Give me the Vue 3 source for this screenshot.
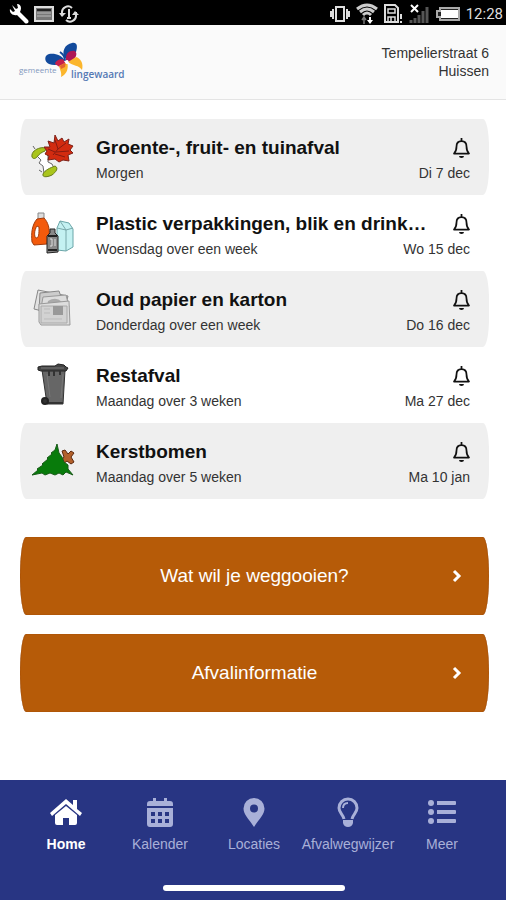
<script setup>
import { ref } from 'vue'

const pickups = ref([
  { icon: 'gft', title: 'Groente-, fruit- en tuinafval', when: 'Morgen', date: 'Di 7 dec' },
  { icon: 'plastic', title: 'Plastic verpakkingen, blik en drink…', when: 'Woensdag over een week', date: 'Wo 15 dec' },
  { icon: 'paper', title: 'Oud papier en karton', when: 'Donderdag over een week', date: 'Do 16 dec' },
  { icon: 'bin', title: 'Restafval', when: 'Maandag over 3 weken', date: 'Ma 27 dec' },
  { icon: 'tree', title: 'Kerstbomen', when: 'Maandag over 5 weken', date: 'Ma 10 jan' }
])

const actions = ['Wat wil je weggooien?', 'Afvalinformatie']

const tabs = ['Home', 'Kalender', 'Locaties', 'Afvalwegwijzer', 'Meer']
const activeTab = ref('Home')
</script>

<template>
  <div class="app">
    <!-- status bar -->
    <div class="status">
      <div class="status-group left">
        <svg width="20" height="20" viewBox="0 0 20 20">
          <path d="M3 1 L7 5 L9 4 L8 0 C12 0 13 4 11 8 L19 16 C21 19 17 21 15 18 L8 11 C4 12 0 9 1 5 L4 8 L6 7 Z" fill="#fff" />
        </svg>
        <svg width="20" height="16" viewBox="0 0 20 16">
          <rect x="1" y="1" width="18" height="14" fill="#777" stroke="#ddd" stroke-width="2" />
          <path d="M3 4h14" stroke="#222" stroke-width="2" />
          <path d="M3 7h14M3 10h14" stroke="#bbb" />
        </svg>
        <svg width="20" height="18" viewBox="0 0 20 18" fill="none" stroke="#ddd" stroke-width="2">
          <path d="M3 11V8a6 6 0 0 1 10-5M17 7v3a6 6 0 0 1-10 5M10 4v9M8 13h4" />
          <path d="M0 8h7l-4 4zM13 10h7l-4-4z" fill="#ddd" stroke="none" />
        </svg>
      </div>
      <div class="status-group">
        <svg width="20" height="18" viewBox="0 0 20 18" fill="none" stroke="#ddd">
          <rect x="6" y="2" width="8" height="14" stroke-width="2" />
          <path d="M3 4v10M17 4v10" stroke-width="2" />
          <path d="M1 6v6M19 6v6" stroke-width="2" />
        </svg>
        <svg width="22" height="22" viewBox="0 0 22 22" fill="none" stroke="#ccc">
          <path d="M1 6Q11-2 21 6M4 9Q11 3 18 9M7 12Q11 8 15 12" stroke-width="3" />
          <path d="M8 21v-6M6 17l2-3 2 3" stroke="#777" stroke-width="1.500" />
          <path d="M14 14v5" stroke="#fff" stroke-width="2" />
          <path d="M11 17h6l-3 4z" fill="#fff" stroke="none" />
        </svg>
        <svg width="19" height="20" viewBox="0 0 19 20" fill="none" stroke="#ddd">
          <path d="M1 1h10l3 3v14H1z" stroke-width="2" />
          <path d="M4 5h7v4H4z" stroke-width="1.500" />
          <path d="M4 18v-5h7v5M7 13v5" stroke-width="1.500" />
          <path d="M17 10v5M17 17v2" stroke-width="2" />
        </svg>
        <svg width="21" height="20" viewBox="0 0 21 20" fill="none">
          <path d="M2 19v-3M6 19v-5M10 19v-8M14 19V7M18 19V3" stroke="#555" stroke-width="3" />
          <path d="M2 1l7 7M9 1L2 8" stroke="#fff" stroke-width="2" />
        </svg>
        <svg width="24" height="14" viewBox="0 0 24 14">
          <path d="M4 1h19v12H4v-3H1V4h3z" fill="#222" stroke="#aaa" stroke-width="2" />
          <rect x="5" y="3" width="17" height="8" fill="#fff" />
        </svg>
        <span class="clock">12:28</span>
      </div>
    </div>

    <header class="header">
      <svg class="logo" width="110" height="44" viewBox="0 0 110 44" role="img" aria-label="gemeente lingewaard">
        <path d="M46 21C43 15 36 13 30 14C25 15 25 22 30 24C35 26 41 25 46 22Z" fill="#124a9c" />
        <path d="M46 18C42 12 46 4 53 3C58 2 59 6 57 12L48 19Z" fill="#124a9c" />
        <path d="M36 24C37 19 44 18 47 21C48 25 46 28 42 28Z" fill="#c51f4c" />
        <path d="M47 20C46 13 51 10 56 11C59 14 57 19 50 22Z" fill="#ae1855" />
        <path d="M40 26L48 22C50 28 48 34 42 37C43 33 41 30 40 26Z" fill="#fbb62d" />
        <path d="M49 22L57 17C61 18 65 23 63 30C60 25 54 26 49 22Z" fill="#fbb62d" />
        <path d="M41 26L47 22L46 27L42 29Z" fill="#e4652f" />
        <path d="M46 21C46 17 44 14 41 12" fill="none" stroke="#124a9c" stroke-width="2" />
        <path d="M45 21L49 20L50 24L47 24Z" fill="#fff" />
        <text x="0" y="33" class="logo-small">gemeente</text>
        <text x="52" y="38" class="logo-big">lingewaard</text>
      </svg>
      <address class="address">Tempelierstraat 6<br />Huissen</address>
    </header>

    <main class="content">
      <ul class="pickups">
        <li v-for="item in pickups" :key="item.title" class="pickup">
          <svg v-if="item.icon === 'gft'" class="pic" viewBox="0 0 46 46">
            <path d="M8 21L16 16L19 22L18 27L25 32L14 38L13 32L9 28L11 25Z" fill="#fff" />
            <path d="M8 22L11 25L9 28L13 31L14 38M16 17L18 21L18 27L22 29L24 33M5 14L3 11M12 37L9 35" fill="none" stroke="#666" />
            <path d="M2 22C1 17 6 14 10 13C14 12 17 13 15 16C12 17 9 19 7 22C5 24 3 24 2 22Z" fill="#a9c51c" stroke="#687b19" />
            <path d="M13 39C15 35 20 33 25 31C29 33 26 37 22 40C18 42 12 43 13 39Z" fill="#a9c51c" stroke="#687b19" />
            <path d="M25 0L28 6L32 3L34 7L39 4L38 9L43 11L40 15L43 18L38 20L39 26L33 25L29 27L25 24L18 25L19 21L15 19L17 16L14 12L20 12L18 6L24 8Z" fill="#d22b10" stroke="#7c2118" />
            <path d="M23 20L28 14L25 5M28 14L36 8M26 17L39 16M25 19L35 22M25 17L18 14" fill="none" stroke="#851b10" />
          </svg>
          <svg v-else-if="item.icon === 'plastic'" class="pic" viewBox="0 0 46 46">
            <path d="M8 2h6v8H8z" fill="#ddd" stroke="#888" />
            <path d="M7 8L14 7C18 11 20 18 19 24L17 33L4 34L2 31C1 22 2 14 7 8Z" fill="#f35a0c" stroke="#a13b0c" />
            <path d="M7 15C4 19 4 26 6 27C9 27 9 23 9 16Z" fill="#fff" stroke="#a13b0c" />
            <path d="M27 17L30 10L39 12L43 18V36L36 40L27 39Z" fill="#c4f1f2" stroke="#6ba6a9" />
            <path d="M27 17L36 19L43 17M36 19V40M30 10L36 19" fill="none" stroke="#79a8aa" />
            <path d="M17 25L20 22V18H25V22L28 25V41L17 42Z" fill="#888" stroke="#222" />
            <path d="M18 25h9M18 39h9" stroke="#222" stroke-width="2" />
            <path d="M20 28h2v7h-2M25 28v7" fill="none" stroke="#ddd" />
          </svg>
          <svg v-else-if="item.icon === 'paper'" class="pic" viewBox="0 0 46 46">
            <path d="M8 3L38 9L33 29L4 22Z" fill="#e2e2e2" stroke="#888" />
            <path d="M10 6L29 4L35 21L9 24Z" fill="#ccc" stroke="#888" />
            <path d="M13 10L36 8L39 20L11 21Z" fill="#ddd" stroke="#999" />
            <path d="M18 14Q26 9 32 15V20H17Z" fill="#aaa" />
            <path d="M9 17L39 14L40 38L11 38L9 35Z" fill="#ddd" stroke="#999" />
            <path d="M11 19H37V36H11Z" fill="#d2d2d2" stroke="#aaa" />
            <rect x="23" y="19" width="10" height="9" fill="#999" />
            <path d="M14 22h6M14 26h6M14 32h18" stroke="#bbb" />
          </svg>
          <svg v-else-if="item.icon === 'bin'" class="pic" viewBox="0 0 46 46">
            <path d="M12 7H35L33 41H17Z" fill="#666" stroke="#333" />
            <path d="M8 4L12 3H25L28 1L34 2L36 4L38 5L36 8H11L8 7Z" fill="#444" stroke="#222" />
            <path d="M11 5H34" stroke="#777" />
            <path d="M19 8v5M24 8v5M30 8v4M17 40h16" fill="none" stroke="#333" stroke-width="2" />
            <circle cx="15" cy="38" r="3" fill="#333" stroke="#222" stroke-width="2" />
            <path d="M17 11L20 34M33 11L31 35" stroke="#777" />
          </svg>
          <svg v-else class="pic" viewBox="0 0 46 46">
            <path d="M32 12L35 11L38 15L41 12L44 14L41 18L44 23L41 25L37 22L33 25L31 22L34 18Z" fill="#b3602b" stroke="#5c2a10" />
            <path d="M27 5L29 14L32 18L34 23L38 26L38 30L43 36L36 33L33 36L29 34L25 36L20 34L15 36L12 34L2 36L8 31L7 30L13 26L12 25L18 20L17 19L22 15L21 14L25 11Z" fill="#087b0b" stroke="#185b18" />
          </svg>
          <div class="info">
            <h2 class="title">{{ item.title }}</h2>
            <p class="sub">{{ item.when }}</p>
          </div>
          <div class="side">
            <button type="button" class="bell" :aria-label="item.title">
              <svg width="17" height="20" viewBox="0 0 17 20" fill="none" stroke="#111" stroke-width="1.750">
                <path d="M8.500 0v3M1 15.500C3 13.500 3.500 12 3.500 8.500C3.500 5 5.500 3 8.500 3S13.500 5 13.500 8.500C13.500 12 14 13.500 16 15.500Z" stroke-linejoin="round" />
                <path d="M6 18a2.500 2 0 0 0 5 0z" fill="#111" stroke="none" />
              </svg>
            </button>
            <p class="sub">{{ item.date }}</p>
          </div>
        </li>
      </ul>

      <div class="actions">
        <button v-for="label in actions" :key="label" type="button" class="action">
          <span></span>
          <span>{{ label }}</span>
          <svg width="10" height="14" viewBox="0 0 10 14" fill="none" stroke="#fff" stroke-width="3">
            <path d="M2 2l5 5-5 5" />
          </svg>
        </button>
      </div>
    </main>

    <footer class="footer">
      <nav class="tabs">
        <a
          v-for="tab in tabs"
          :key="tab"
          href="#"
          :class="['tab', { active: tab === activeTab }]"
          @click.prevent="activeTab = tab"
        >
          <svg v-if="tab === 'Home'" width="34" height="30" viewBox="0 0 34 30">
            <path d="M17 2L24 8V3H28V12L33 16L31 19L17 7L3 19L1 16Z" fill="currentColor" />
            <path d="M17 9L28 18V26Q28 28 26 28H20V21H14V28H8Q6 28 6 26V18Z" fill="currentColor" />
          </svg>
          <svg v-else-if="tab === 'Kalender'" width="26" height="30" viewBox="0 0 26 30">
            <path
              fill="currentColor"
              fill-rule="evenodd"
              d="M6 1h3v3h8V1h3v3h3q3 0 3 3v2H0V7q0-3 3-3h3zM0 11h26v16q0 3-3 3H3q-3 0-3-3zM4 15v4h4v-4zM11 15v4h4v-4zM18 15v4h4v-4zM4 22v4h4v-4zM11 22v4h4v-4zM18 22v4h4v-4z"
            />
          </svg>
          <svg v-else-if="tab === 'Locaties'" width="22" height="30" viewBox="0 0 22 30">
            <path fill="currentColor" fill-rule="evenodd" d="M11 1A10.500 10.500 0 0 0 .5 11.500C.5 17 5 21 11 30C17 21 21.500 17 21.500 11.500A10.500 10.500 0 0 0 11 1ZM11 7.500a4 4 0 1 1 0 8a4 4 0 0 1 0-8Z" />
          </svg>
          <svg v-else-if="tab === 'Afvalwegwijzer'" width="22" height="30" viewBox="0 0 22 30" fill="none" stroke="currentColor">
            <path d="M7 22C6 17 2 16 2 11A9 9 0 0 1 20 11C20 16 16 17 15 22" stroke-width="3" />
            <path d="M6 11Q6 6 11 6" stroke-width="2" />
            <path d="M6 23h10v3q-1 4-5 4t-5-4z" fill="currentColor" stroke="none" />
          </svg>
          <svg v-else width="30" height="30" viewBox="0 0 30 30" fill="currentColor">
            <circle cx="4" cy="6" r="3" />
            <circle cx="4" cy="15" r="3" />
            <circle cx="4" cy="24" r="3" />
            <path d="M10 4h18q1 0 1 1v2q0 1-1 1H10zM10 13h18q1 0 1 1v2q0 1-1 1H10zM10 22h18q1 0 1 1v2q0 1-1 1H10z" />
          </svg>
          <span>{{ tab }}</span>
        </a>
      </nav>
      <div class="home-bar"></div>
    </footer>
  </div>
</template>

<style>
body {
  margin: 0;
  background: #fff;
}
</style>

<style scoped>
.app {
  min-height: 100vh;
  display: flex;
  flex-direction: column;
  font-family: 'Liberation Sans', Arial, sans-serif;
  color: #111;
}

button {
  border: 0;
  padding: 0;
  background: none;
  font: inherit;
  cursor: pointer;
}

.status {
  box-sizing: border-box;
  height: 25px;
  display: flex;
  align-items: center;
  justify-content: space-between;
  padding: 2px 3px 0 9px;
  background: #000;
}

.status-group {
  display: flex;
  align-items: center;
  gap: 6px;
}

.left {
  gap: 5px;
}

.clock {
  font-family: Roboto, sans-serif;
  font-size: 15px;
  line-height: 20px;
  color: #ddd;
}

.header {
  display: flex;
  align-items: center;
  justify-content: space-between;
  box-sizing: border-box;
  height: 75px;
  padding: 0 17px 0 19px;
  background: #fafafa;
  border-bottom: 1px solid #e4e4e4;
}

.logo {
  overflow: visible;
}

.logo-small {
  font-family: 'Open Sans', sans-serif;
  font-size: 8px;
  fill: #8298bd;
}

.logo-big {
  font-family: 'Open Sans', sans-serif;
  font-size: 10px;
  font-weight: 600;
  fill: #5579b4;
}

.address {
  font-size: 14px;
  line-height: 18px;
  font-style: normal;
  text-align: right;
  color: #333;
}

.content {
  flex: 1;
  padding: 19px 17px 38px 20px;
}

.pickups {
  margin: 0;
  padding: 0;
  list-style: none;
}

.pickup {
  display: flex;
  align-items: flex-start;
  padding: 16px 19px 10px 10px;
  border-radius: 6px / 28px;
}

.pickup:nth-child(odd) {
  background: #efefef;
}

.pic {
  flex: none;
  width: 46px;
  height: 46px;
  margin-right: 20px;
}

.info {
  flex: 1;
  min-width: 0;
}

.title {
  margin: 0;
  font-size: 19px;
  line-height: 26px;
  white-space: nowrap;
}

.sub {
  margin: 0;
  font-size: 14px;
  line-height: 24px;
  white-space: nowrap;
  color: #333;
}

.side {
  flex: none;
  display: flex;
  flex-direction: column;
  align-items: flex-end;
}

.bell {
  display: flex;
  align-items: center;
  height: 26px;
}

.actions {
  display: flex;
  flex-direction: column;
  gap: 19px;
  margin-top: 38px;
}

.action {
  display: grid;
  grid-template-columns: 10px 1fr 10px;
  align-items: center;
  height: 78px;
  padding: 0 27px;
  border-radius: 6px / 50%;
  background: #b65b08;
  box-shadow: inset 0 0 1px #7a3000;
  color: #fff;
  font-size: 19px;
  line-height: 24px;
}

.footer {
  background: #283583;
  padding: 17px 17px 9px 19px;
}

.tabs {
  display: grid;
  grid-template-columns: repeat(5, 1fr);
}

.tab {
  display: flex;
  flex-direction: column;
  align-items: center;
  gap: 7px;
  font-size: 14px;
  line-height: 20px;
  text-decoration: none;
  color: #a9b0d8;
}

.active {
  color: #fff;
  font-weight: bold;
}

.home-bar {
  width: 182px;
  height: 6px;
  margin: 31px auto 0;
  border-radius: 3px;
  background: #fff;
}
</style>
